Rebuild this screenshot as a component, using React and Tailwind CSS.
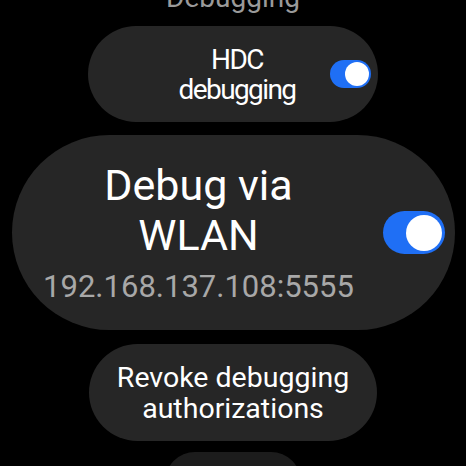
export default function App() {
  return (
    <div className="w-[466px] h-[466px] overflow-hidden bg-black flex flex-col items-center font-['Roboto','Noto_Sans',sans-serif] text-white">
      <div className="mt-[-16px] text-[28px] leading-[28px] text-[#9a9a9a]">Debugging</div>

      {/* HDC debugging */}
      <div className="mt-[14px] w-[290px] h-[96px] shrink-0 rounded-full bg-[#262626] flex items-center pl-[56px] pr-[7px]">
        <div className="flex-1 text-center text-[28px] leading-[30px] tracking-[-1.6px] pt-[2px]">
          HDC<br />debugging
        </div>
        <div className="w-[41px] h-[28px] rounded-full bg-[#1f6ff5] flex items-center justify-end pr-[2px]">
          <div className="w-[24px] h-[24px] rounded-full bg-white" />
        </div>
      </div>

      {/* Debug via WLAN */}
      <div className="mt-[13px] w-[443px] h-[195px] shrink-0 rounded-full bg-[#262626] flex items-center pl-[14px] pr-[10px]">
        <div className="flex-1 mr-[11px] flex flex-col items-center">
          <div className="text-center text-[43px] leading-[50px]">
            Debug via<br />WLAN
          </div>
          <div className="mt-[8px] text-[31px] leading-[38px] text-[#a8a8a8] whitespace-nowrap">192.168.137.108:5555</div>
        </div>
        <div className="w-[62px] h-[43px] rounded-full bg-[#1f6ff5] flex items-center justify-end pr-[3px]">
          <div className="w-[36px] h-[36px] rounded-full bg-white" />
        </div>
      </div>

      {/* Revoke */}
      <div className="mt-[14px] w-[288px] h-[97px] shrink-0 rounded-full bg-[#262626] flex items-center justify-center">
        <div className="text-center text-[28.5px] leading-[31px]">
          Revoke debugging<br />authorizations
        </div>
      </div>

      <div className="mt-[11px] w-[136px] h-[60px] shrink-0 rounded-full bg-[#1c1c1c]" />
    </div>
  )
}
